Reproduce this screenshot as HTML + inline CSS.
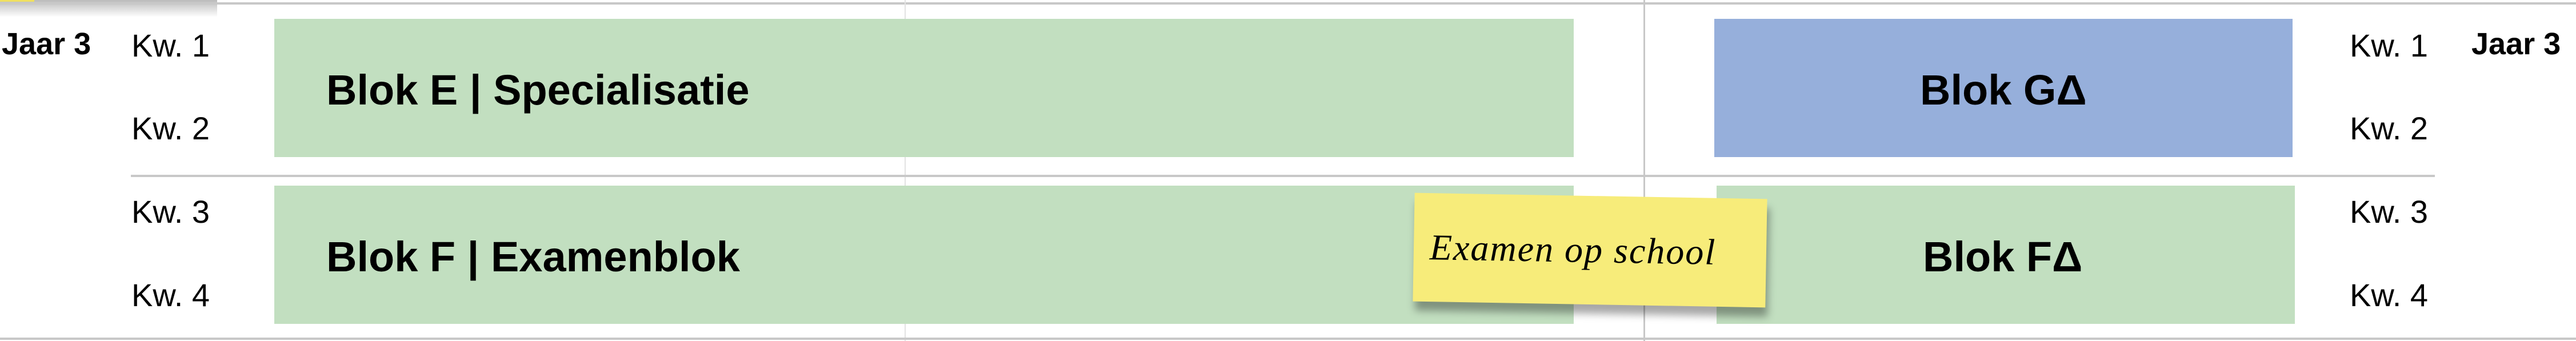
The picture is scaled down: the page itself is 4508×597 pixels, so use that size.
<!DOCTYPE html>
<html><head><meta charset="utf-8"><style>
*{margin:0;padding:0}
body{width:4508px;height:597px;position:relative;background:#fff;overflow:hidden;font-family:"Liberation Sans",Arial,sans-serif;color:#000}
.a{position:absolute}
.hl{position:absolute;background:#c8c8c8;height:4px}
.vl{position:absolute;background:#c8c8c8;width:3px;top:0;height:597px}
.g{position:absolute;background:#c2dfc0}
.kw{position:absolute;font-size:56px;line-height:1;white-space:nowrap}
.jr{position:absolute;font-size:54px;font-weight:bold;line-height:1;white-space:nowrap}
.bt{position:absolute;font-size:74px;font-weight:bold;line-height:1;white-space:nowrap}
</style></head><body>
<div class="a" style="left:0;top:0;width:380px;height:30px;background:linear-gradient(#bbb,rgba(255,255,255,0));"></div>
<div class="a" style="left:0;top:0;width:60px;height:3px;background:#f0e060"></div>
<div class="hl" style="left:0;top:4px;width:4508px"></div>
<div class="vl" style="left:1583px;background:#e2e2e2;width:2px"></div>
<div class="vl" style="left:2876px"></div>
<div class="hl" style="left:229px;top:306px;width:4032px"></div>
<div class="hl" style="left:0;top:591px;width:4508px"></div>

<div class="g" style="left:480px;top:33px;width:2274px;height:242px"></div>
<div class="g" style="left:480px;top:325px;width:2274px;height:242px"></div>
<div class="a" style="left:3000px;top:33px;width:1012px;height:242px;background:#96afdb"></div>
<div class="g" style="left:3004px;top:325px;width:1012px;height:242px"></div>

<div class="jr" style="left:3px;top:50px">Jaar 3</div>
<div class="jr" style="left:4325px;top:50px">Jaar 3</div>
<div class="kw" style="left:230px;top:52px">Kw. 1</div>
<div class="kw" style="left:230px;top:197px">Kw. 2</div>
<div class="kw" style="left:230px;top:343px">Kw. 3</div>
<div class="kw" style="left:230px;top:489px">Kw. 4</div>
<div class="kw" style="left:4112px;top:52px">Kw. 1</div>
<div class="kw" style="left:4112px;top:197px">Kw. 2</div>
<div class="kw" style="left:4112px;top:343px">Kw. 3</div>
<div class="kw" style="left:4112px;top:489px">Kw. 4</div>

<div class="bt" style="left:571px;top:121px">Blok E | Specialisatie</div>
<div class="bt" style="left:571px;top:413px">Blok F | Examenblok</div>
<div class="bt" style="left:3360px;top:121px">Blok GΔ</div>
<div class="bt" style="left:3365px;top:413px">Blok FΔ</div>

<div class="a" style="left:2474px;top:343px;width:617px;height:190px;background:#f7ec7a;transform:rotate(1deg);box-shadow:4px 16px 14px rgba(0,0,0,0.35)">
<div class="a" style="left:28px;top:58px;font-family:'Liberation Serif',serif;font-style:italic;font-size:64px;letter-spacing:2px;white-space:nowrap">Examen op school</div>
</div>
</body></html>
